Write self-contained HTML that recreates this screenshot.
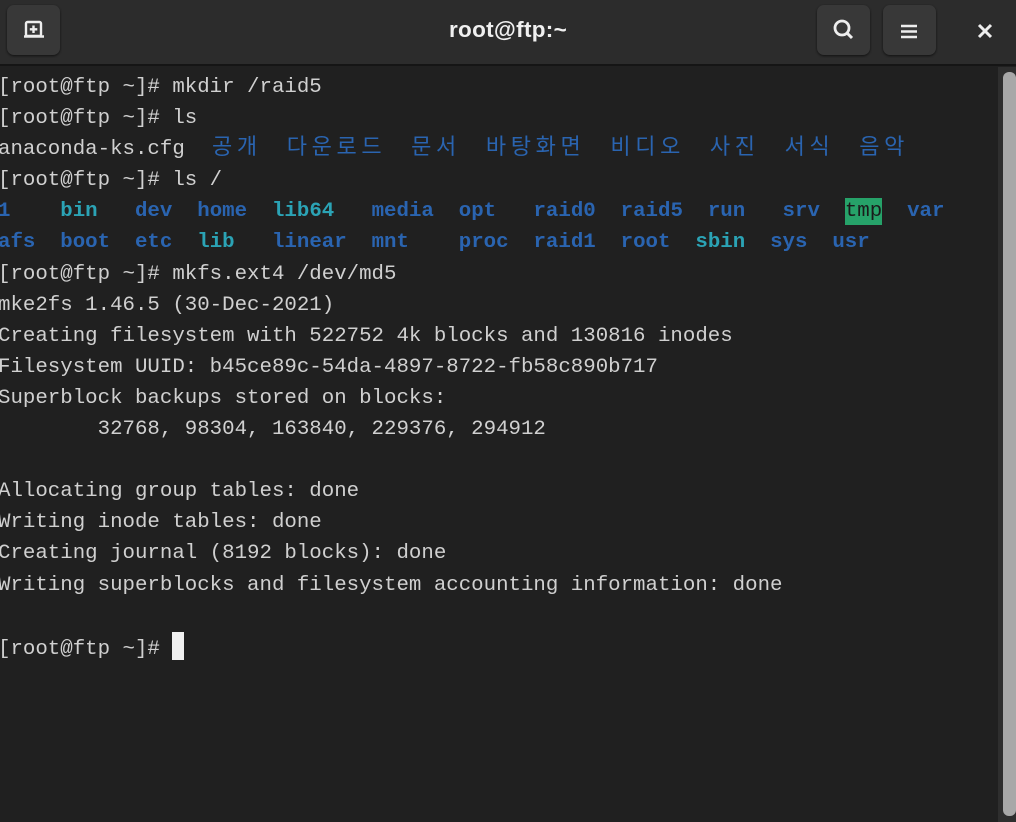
<!DOCTYPE html>
<html><head><meta charset="utf-8"><style>
*{margin:0;padding:0;box-sizing:border-box}
body{width:1016px;height:822px;background:#202020;overflow:hidden;position:relative;font-family:"Liberation Mono","Noto Sans CJK KR",monospace}
.tb{position:absolute;left:0;top:0;width:1016px;height:66px;background:#2c2c2c;border-bottom:2px solid #151515}
.btn{position:absolute;top:5px;width:53px;height:50px;background:#383838;border-radius:7px;box-shadow:0 1px 2px #111}
.title{position:absolute;left:0;right:0;top:17px;text-align:center;color:#f0f0f0;font:bold 22.5px "Liberation Sans",sans-serif;letter-spacing:0.3px}
pre{position:absolute;left:-2px;top:72px;font-family:"Liberation Mono",monospace;font-size:20.75px;line-height:31.1px;color:#d0d0d0;white-space:pre}
.b{color:#2a64b0;font-weight:bold}
.c{color:#2ba3b5;font-weight:bold}
.g{background:#26a269;color:#1a1a1a;display:inline-block;line-height:27px;vertical-align:top;margin-top:2px}
.k{display:inline-block;width:24.9px;text-align:center;color:#2a64b0;font-family:"Noto Sans CJK KR",sans-serif;font-size:22px;line-height:18px;vertical-align:baseline}
.cur{display:inline-block;width:12px;height:28px;background:#f0f0f0;vertical-align:-6px}
.track{position:absolute;left:998px;top:67px;width:18px;height:755px;background:#2e2e2e}
.thumb{position:absolute;left:1003px;top:72px;width:13px;height:744px;background:#a8a8a8;border-radius:6px}
</style></head><body>
<div class="tb">
 <div class="btn" style="left:7px"><svg width="53" height="50" viewBox="0 0 53 50"><rect x="19" y="17" width="15" height="14" rx="1.5" fill="none" stroke="#eee" stroke-width="2.4"/><line x1="17" y1="31.5" x2="37" y2="31.5" stroke="#eee" stroke-width="2.4"/><path d="M26.5 20.5v7.5M22.8 24.3h7.5" stroke="#eee" stroke-width="2.4"/></svg></div>
 <div class="title">root@ftp:~</div>
 <div class="btn" style="left:817px"><svg width="53" height="50" viewBox="0 0 53 50"><circle cx="25" cy="23" r="7" fill="none" stroke="#eee" stroke-width="2.8"/><line x1="30" y1="28" x2="35" y2="33" stroke="#eee" stroke-width="3"/></svg></div>
 <div class="btn" style="left:883px"><svg width="53" height="50" viewBox="0 0 53 50"><path d="M18 21h16M18 26.5h16M18 32h16" stroke="#eee" stroke-width="2.6"/></svg></div>
 <svg style="position:absolute;left:970px;top:16px" width="30" height="30" viewBox="0 0 30 30"><path d="M9 9l12 12M21 9L9 21" stroke="#eee" stroke-width="3"/></svg>
</div>
<pre>[root@ftp ~]# mkdir /raid5
[root@ftp ~]# ls
anaconda-ks.cfg  <span class="k">공</span><span class="k">개</span>  <span class="k">다</span><span class="k">운</span><span class="k">로</span><span class="k">드</span>  <span class="k">문</span><span class="k">서</span>  <span class="k">바</span><span class="k">탕</span><span class="k">화</span><span class="k">면</span>  <span class="k">비</span><span class="k">디</span><span class="k">오</span>  <span class="k">사</span><span class="k">진</span>  <span class="k">서</span><span class="k">식</span>  <span class="k">음</span><span class="k">악</span>
[root@ftp ~]# ls /
<span class="b">1</span>    <span class="c">bin</span>   <span class="b">dev</span>  <span class="b">home</span>  <span class="c">lib64</span>   <span class="b">media</span>  <span class="b">opt</span>   <span class="b">raid0</span>  <span class="b">raid5</span>  <span class="b">run</span>   <span class="b">srv</span>  <span class="g">tmp</span>  <span class="b">var</span>
<span class="b">afs</span>  <span class="b">boot</span>  <span class="b">etc</span>  <span class="c">lib</span>   <span class="b">linear</span>  <span class="b">mnt</span>    <span class="b">proc</span>  <span class="b">raid1</span>  <span class="b">root</span>  <span class="c">sbin</span>  <span class="b">sys</span>  <span class="b">usr</span>
[root@ftp ~]# mkfs.ext4 /dev/md5
mke2fs 1.46.5 (30-Dec-2021)
Creating filesystem with 522752 4k blocks and 130816 inodes
Filesystem UUID: b45ce89c-54da-4897-8722-fb58c890b717
Superblock backups stored on blocks:
        32768, 98304, 163840, 229376, 294912

Allocating group tables: done
Writing inode tables: done
Creating journal (8192 blocks): done
Writing superblocks and filesystem accounting information: done

[root@ftp ~]# <span class="cur"></span></pre>
<div class="track"></div><div class="thumb"></div>
</body></html>
